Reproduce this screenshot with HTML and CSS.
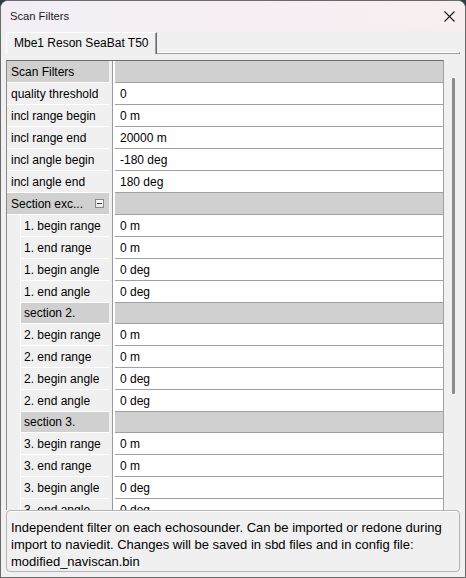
FILE: index.html
```html
<!DOCTYPE html>
<html>
<head>
<meta charset="utf-8">
<title>Scan Filters</title>
<link rel="stylesheet" href="styles.css">
</head>
<body>
<div class="window">
  <div class="titlebar">
    <span class="title">Scan Filters</span>
    <svg class="close" width="11" height="11" viewBox="0 0 11 11"><path d="M0.5 0.5L10.5 10.5M10.5 0.5L0.5 10.5" stroke="#1a1a1a" stroke-width="1.1"/></svg>
  </div>
  <div class="content">
    <div class="tabstrip">
      <div class="tab">Mbe1 Reson SeaBat T50</div>
      <div class="tabfill"></div>
    </div>
    <div class="gridarea">
      <div class="grid">
        <div class="row cat"><div class="label">Scan Filters</div><div class="sep"></div><div class="value"></div></div>
        <div class="row"><div class="label">quality threshold</div><div class="sep"></div><div class="value">0</div></div>
        <div class="row"><div class="label">incl range begin</div><div class="sep"></div><div class="value">0 m</div></div>
        <div class="row"><div class="label">incl range end</div><div class="sep"></div><div class="value">20000 m</div></div>
        <div class="row"><div class="label">incl angle begin</div><div class="sep"></div><div class="value">-180 deg</div></div>
        <div class="row"><div class="label">incl angle end</div><div class="sep"></div><div class="value">180 deg</div></div>
        <div class="row cat"><div class="label"><span>Section exc...</span><span class="toggle"></span></div><div class="sep"></div><div class="value"></div></div>
        <div class="row sub"><div class="label">1. begin range</div><div class="sep"></div><div class="value">0 m</div></div>
        <div class="row sub"><div class="label">1. end range</div><div class="sep"></div><div class="value">0 m</div></div>
        <div class="row sub"><div class="label">1. begin angle</div><div class="sep"></div><div class="value">0 deg</div></div>
        <div class="row sub"><div class="label">1. end angle</div><div class="sep"></div><div class="value">0 deg</div></div>
        <div class="row sub cat short"><div class="label">section 2.</div><div class="sep"></div><div class="value"></div></div>
        <div class="row sub"><div class="label">2. begin range</div><div class="sep"></div><div class="value">0 m</div></div>
        <div class="row sub"><div class="label">2. end range</div><div class="sep"></div><div class="value">0 m</div></div>
        <div class="row sub"><div class="label">2. begin angle</div><div class="sep"></div><div class="value">0 deg</div></div>
        <div class="row sub"><div class="label">2. end angle</div><div class="sep"></div><div class="value">0 deg</div></div>
        <div class="row sub cat short"><div class="label">section 3.</div><div class="sep"></div><div class="value"></div></div>
        <div class="row sub"><div class="label">3. begin range</div><div class="sep"></div><div class="value">0 m</div></div>
        <div class="row sub"><div class="label">3. end range</div><div class="sep"></div><div class="value">0 m</div></div>
        <div class="row sub"><div class="label">3. begin angle</div><div class="sep"></div><div class="value">0 deg</div></div>
        <div class="row sub"><div class="label">3. end angle</div><div class="sep"></div><div class="value">0 deg</div></div>
        <div class="row sub cat short"><div class="label">section 4.</div><div class="sep"></div><div class="value"></div></div>
      </div>
      <div class="scrollbar"><div class="thumb"></div></div>
    </div>
    <div class="desc">Independent filter on each echosounder. Can be imported or redone during<br>import to naviedit. Changes will be saved in sbd files and in config file:<br>modified_naviscan.bin</div>
  </div>
</div>
</body>
</html>
```
FILE: styles.css
```css
* { box-sizing: border-box; }
html, body { margin: 0; padding: 0; }
body {
  background: #2e3a46;
  font-family: "Liberation Sans", Arial, sans-serif;
  font-size: 12px;
  color: #000;
}
.window {
  width: 466px;
  height: 578px;
  border: 1px solid #6a6a6a;
  border-radius: 8px 8px 0 0;
  background: #f0f0f0;
  display: flex;
  flex-direction: column;
  overflow: hidden;
}
.titlebar {
  height: 30px;
  flex: none;
  display: flex;
  align-items: center;
  justify-content: space-between;
  padding: 0 10px 0 9px;
  background: linear-gradient(to right, #f3eef6, #f6eef4 50%, #f7efef);
}
.title {
  font-size: 11.2px;
  color: #1a1a1a;
}
.close { display: block; margin-top: 0; }
.content {
  flex: 1;
  display: flex;
  flex-direction: column;
  padding: 0 5px;
}
.tabstrip {
  height: 23px;
  flex: none;
  display: flex;
  align-items: flex-end;
}
.tab {
  height: 22px;
  line-height: 20px;
  padding: 0 7px;
  border-top: 1px solid #fff;
  border-left: 1px solid #fff;
  border-right: 1px solid #696969;
  box-shadow: inset -1px 0 0 #a0a0a0;
  background: #f0f0f0;
  white-space: nowrap;
}
.tabfill {
  flex: 1;
  height: 2px;
  border-top: 1px solid #fff;
  border-bottom: 1px solid #a0a0a0;
  border-right: 1px solid #696969;
}
.gridarea {
  margin-top: 6px;
  height: 450px;
  flex: none;
  display: flex;
  overflow: hidden;
}
.grid {
  width: 438px;
  flex: none;
  border-top: 1px solid #6d6d6d;
  border-left: 1px solid #8a8a8a;
  border-right: 1px solid #a0a0a0;
  background: #f0f0f0;
}
.row {
  display: flex;
  height: 22px;
}
.row.short { height: 21px; }
.label {
  width: 102px;
  flex: none;
  padding-left: 4px;
  background: #f0f0f0;
  border-bottom: 1px solid #fff;
  display: flex;
  align-items: center;
  justify-content: space-between;
  white-space: nowrap;
  overflow: hidden;
}
.row.sub .label {
  margin-left: 13px;
  width: 89px;
  border-left: 1px solid #fff;
  padding-left: 3px;
}
.sep {
  width: 6px;
  flex: none;
  background: linear-gradient(to right, #f0f0f0 0 3px, #9a9a9a 3px 4px, #fff 4px);
}
.value {
  flex: 1;
  background: #fff;
  border-bottom: 1px solid #a0a0a0;
  padding-left: 5px;
  display: flex;
  align-items: center;
  white-space: nowrap;
}
.row.cat .label,
.row.cat .value {
  background: #d0d0d0;
}
.toggle {
  width: 9px;
  height: 9px;
  margin-right: 5px;
  border: 1px solid #8a8a8a;
  background: linear-gradient(#fdfdfd, #e8e8e8);
  position: relative;
  flex: none;
}
.toggle::after {
  content: "";
  position: absolute;
  left: 1px;
  top: 3px;
  width: 5px;
  height: 1px;
  background: #3c3c3c;
}
.scrollbar {
  width: 16px;
  flex: none;
  background: #f0f0f0;
  padding-top: 18px;
  padding-left: 8px;
}
.thumb {
  width: 3px;
  height: 316px;
  background: #8b8b8b;
  border-radius: 1px;
}
.desc {
  height: 62px;
  flex: none;
  border: 1px solid #b4b4b4;
  border-radius: 4px;
  box-shadow: inset 0 1px 0 #fff;
  background: #f0f0f0;
  padding: 8px 4px 0 4px;
  font-size: 13px;
  line-height: 17px;
  white-space: nowrap;
}
```
